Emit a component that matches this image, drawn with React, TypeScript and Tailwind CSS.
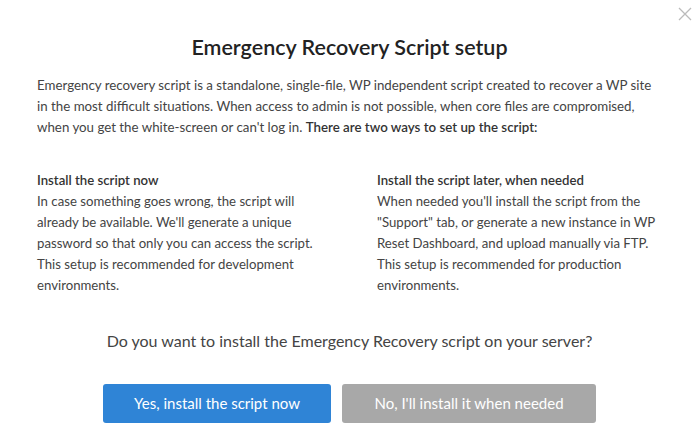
import React from "react";

export default function App() {
  return (
    <div className="relative w-[699px] h-[434px] bg-white font-['Lato',sans-serif] overflow-hidden">
      {/* Close */}
      <button className="absolute right-[6px] top-[6px] w-[16px] h-[16px] text-[#bbbbbb]" aria-label="Close">
        <svg viewBox="0 0 16 16" className="w-full h-full" fill="none" stroke="currentColor" strokeWidth="1.3">
          <path d="M2 2 L14 14 M14 2 L2 14" />
        </svg>
      </button>

      <div className="pt-[32px] px-[37px]">
        <h1 className="text-center text-[21.5px] leading-[30px] font-semibold text-[#222222]">
          Emergency Recovery Script setup
        </h1>

        <p className="mt-[13px] text-[13.3px] leading-[21px] text-[#444444] whitespace-nowrap">
          Emergency recovery script is a standalone, single-file, WP independent script created to recover a WP site
          <br />
          in the most difficult situations. When access to admin is not possible, when core files are compromised,
          <br />
          when you get the white-screen or can't log in.{" "}
          <span className="font-semibold text-[#333333]">There are two ways to set up the script:</span>
        </p>

        <div className="mt-[32px] grid grid-cols-[340px_1fr] text-[13.2px] leading-[21px] text-[#444444]">
          <div className="w-[290px]">
            <div className="font-semibold text-[#333333]">Install the script now</div>
            <div>
              In case something goes wrong, the script will already be available. We'll generate a unique password so
              that only you can access the script. This setup is recommended for development environments.
            </div>
          </div>
          <div className="w-[288px]">
            <div className="font-semibold text-[#333333]">Install the script later, when needed</div>
            <div>
              When needed you'll install the script from the "Support" tab, or generate a new instance in WP Reset
              Dashboard, and upload manually via FTP. This setup is recommended for production environments.
            </div>
          </div>
        </div>

        <p className="mt-[34px] text-center text-[16px] leading-[22px] text-[#444444]">
          Do you want to install the Emergency Recovery script on your server?
        </p>

        <div className="mt-[32px] flex justify-center gap-[11px]">
          <button className="w-[228px] h-[39px] rounded-[3px] bg-[#2f84d6] text-white text-[15px]">
            Yes, install the script now
          </button>
          <button className="w-[254px] h-[39px] rounded-[3px] bg-[#a8a8a8] text-white text-[15px]">
            No, I'll install it when needed
          </button>
        </div>
      </div>
    </div>
  );
}
